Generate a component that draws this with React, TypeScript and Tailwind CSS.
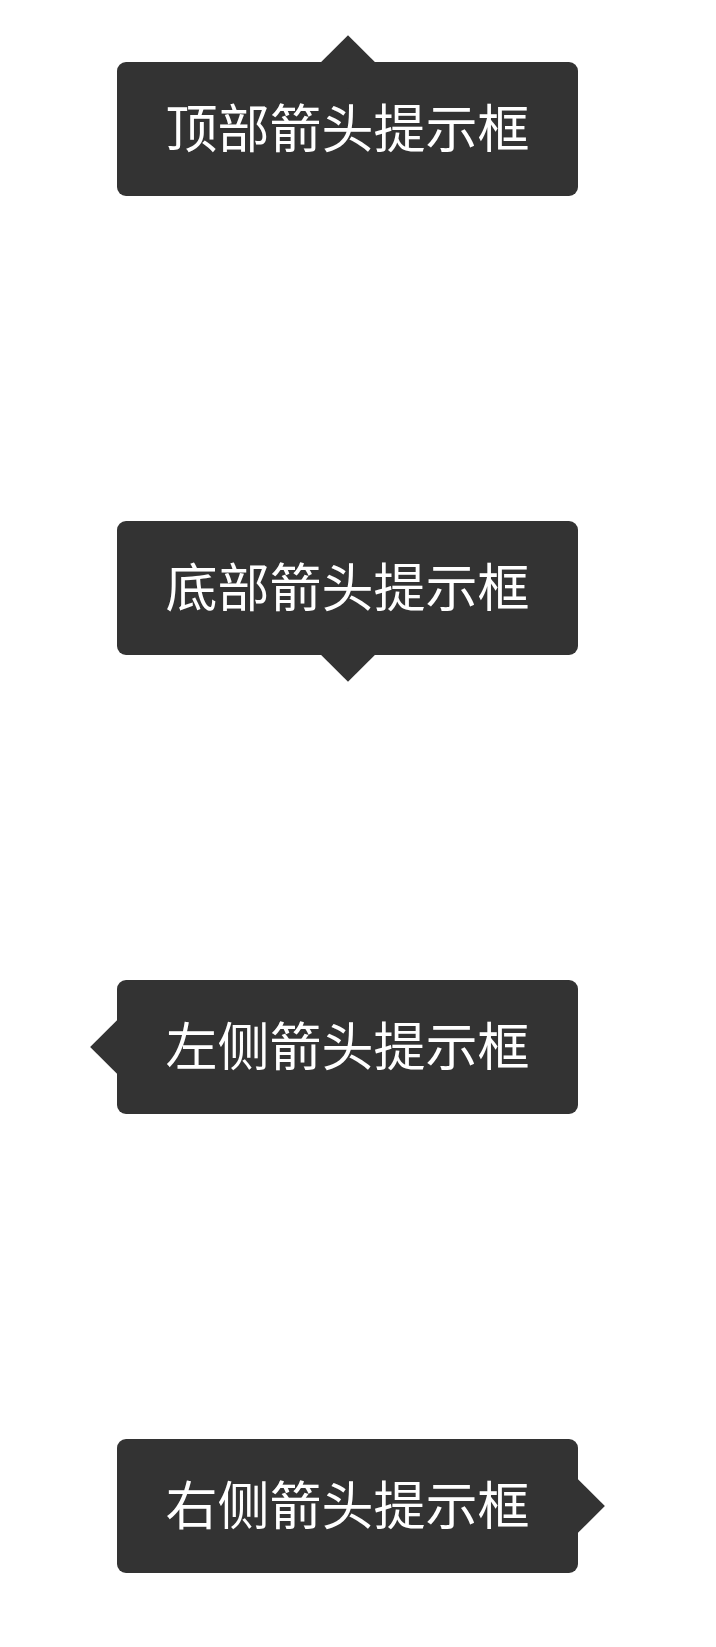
import React from "react";

type Side = "top" | "bottom" | "left" | "right";

const arrowClass: Record<Side, string> = {
  top: "left-1/2 top-0 -translate-x-1/2 -translate-y-1/2",
  bottom: "left-1/2 bottom-0 -translate-x-1/2 translate-y-1/2",
  left: "left-0 top-1/2 -translate-x-1/2 -translate-y-1/2",
  right: "right-0 top-1/2 translate-x-1/2 -translate-y-1/2",
};

function Tip({ side, label }: { side: Side; label: string }) {
  return (
    <div className="relative flex h-[134px] w-[461px] items-center justify-center rounded-[9px] bg-[#333333] pb-[6px]">
      <span
        className={`absolute h-[38px] w-[38px] rotate-45 bg-[#333333] ${arrowClass[side]}`}
      />
      <span className="relative text-[52px] leading-none text-white [font-family:'Noto_Sans_CJK_SC',sans-serif]">
        {label}
      </span>
    </div>
  );
}

export default function App() {
  return (
    <div className="min-h-[1647px] w-full bg-white pl-[117px] pt-[62px]">
      <div className="flex flex-col gap-[325px]">
        <Tip side="top" label="顶部箭头提示框" />
        <Tip side="bottom" label="底部箭头提示框" />
        <Tip side="left" label="左侧箭头提示框" />
        <Tip side="right" label="右侧箭头提示框" />
      </div>
    </div>
  );
}
